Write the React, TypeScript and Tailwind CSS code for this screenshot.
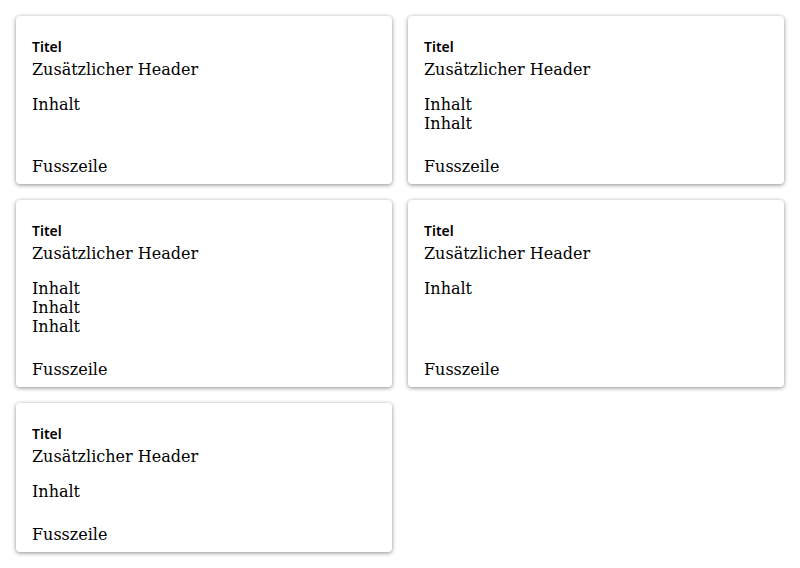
// Cards grid
export default function App() {
  const cards = [1, 2, 3, 1, 1];

  return (
    <div className="grid grid-cols-2 gap-4 p-4 bg-white">
      {cards.map((lines, i) => (
        <div
          key={i}
          className="flex flex-col rounded bg-white px-4 pt-[21px] pb-2 shadow-[0_1px_4px_rgba(0,0,0,0.45)] font-['DejaVu_Serif',serif] text-base leading-[19px] text-black"
        >
          <div className="font-['Noto_Sans',sans-serif] text-sm font-semibold leading-5">Titel</div>
          <div className="mt-[3px]">Zusätzlicher Header</div>
          <div className="mt-4 flex-1">
            {Array.from({ length: lines }).map((_, j) => (
              <div key={j}>Inhalt</div>
            ))}
          </div>
          <div className="mt-6">Fusszeile</div>
        </div>
      ))}
    </div>
  );
}
